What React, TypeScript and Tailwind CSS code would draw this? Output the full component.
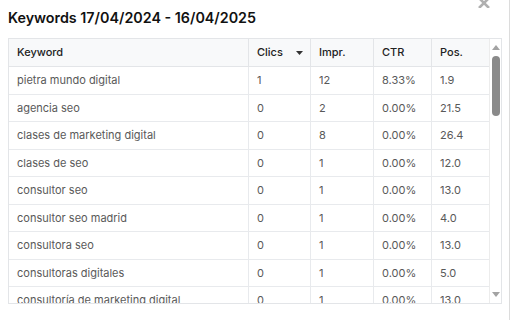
import React from "react";

const rows: [string, string, string, string, string][] = [
  ["pietra mundo digital", "1", "12", "8.33%", "1.9"],
  ["agencia seo", "0", "2", "0.00%", "21.5"],
  ["clases de marketing digital", "0", "8", "0.00%", "26.4"],
  ["clases de seo", "0", "1", "0.00%", "12.0"],
  ["consultor seo", "0", "1", "0.00%", "13.0"],
  ["consultor seo madrid", "0", "1", "0.00%", "4.0"],
  ["consultora seo", "0", "1", "0.00%", "13.0"],
  ["consultoras digitales", "0", "1", "0.00%", "5.0"],
  ["consultoría de marketing digital", "0", "1", "0.00%", "13.0"],
];

const widths = ["w-[240px]", "w-[62px]", "w-[63px]", "w-[58px]", "w-[57px]"];

export default function App() {
  return (
    <div
      className="w-[512px] h-[320px] bg-white overflow-hidden relative"
      style={{ fontFamily: "Inter, 'Noto Sans', sans-serif" }}
    >
      <div className="w-[510px] h-[320px] border-r border-[#dcdcdc] flex flex-col">
        <div className="flex items-start justify-between pl-[8px] pr-[18px] h-[38px]">
          <div className="text-[14.3px] font-semibold text-[#111] leading-none mt-[11px]">
            Keywords 17/04/2024 - 16/04/2025
          </div>
          <svg width="14" height="10" viewBox="0 0 14 10" className="-mt-[2px]">
            <path d="M2 0 L12 10 M12 0 L2 10" stroke="#b0b0b0" strokeWidth="2.6" />
          </svg>
        </div>
        <div className="ml-[8px] w-[494px] h-[266px] border border-[#e3e5e8] flex overflow-hidden">
          <div className="w-[480px] overflow-hidden">
            <div className="flex h-[28px] bg-[#f8f9fa] border-b border-[#e3e5e8] text-[11px] font-medium text-[#222]">
              {["Keyword", "Clics", "Impr.", "CTR", "Pos."].map((h, i) => (
                <div
                  key={h}
                  className={`${widths[i]} shrink-0 flex items-center pl-[8px] ${i < 4 ? "border-r border-[#e3e5e8]" : ""}`}
                >
                  <span>{h}</span>
                  {i === 1 && (
                    <svg width="7" height="4" viewBox="0 0 7 4" className="ml-[13px]">
                      <path d="M0 0 H7 L3.5 4 Z" fill="#333" />
                    </svg>
                  )}
                </div>
              ))}
            </div>
            {rows.map((r, ri) => (
              <div
                key={ri}
                className="flex h-[27.5px] border-b border-[#e8eaed] text-[11px] text-[#595959]"
              >
                {r.map((c, i) => (
                  <div
                    key={i}
                    className={`${widths[i]} shrink-0 flex items-center pl-[8px] ${i < 4 ? "border-r border-[#e8eaed]" : ""}`}
                  >
                    {c}
                  </div>
                ))}
              </div>
            ))}
          </div>
          <div className="w-[12px] flex flex-col items-center border-l border-[#ececec] bg-white">
            <svg width="8" height="5" viewBox="0 0 8 5" className="mt-[6px]">
              <path d="M0 5 H8 L4 0 Z" fill="#a3a3a3" />
            </svg>
            <div className="mt-[6px] w-[8px] h-[60px] rounded-full bg-[#8a8a8a]" />
            <div className="flex-1" />
            <svg width="8" height="5" viewBox="0 0 8 5" className="mb-[6px]">
              <path d="M0 0 H8 L4 5 Z" fill="#a3a3a3" />
            </svg>
          </div>
        </div>
      </div>
    </div>
  );
}
